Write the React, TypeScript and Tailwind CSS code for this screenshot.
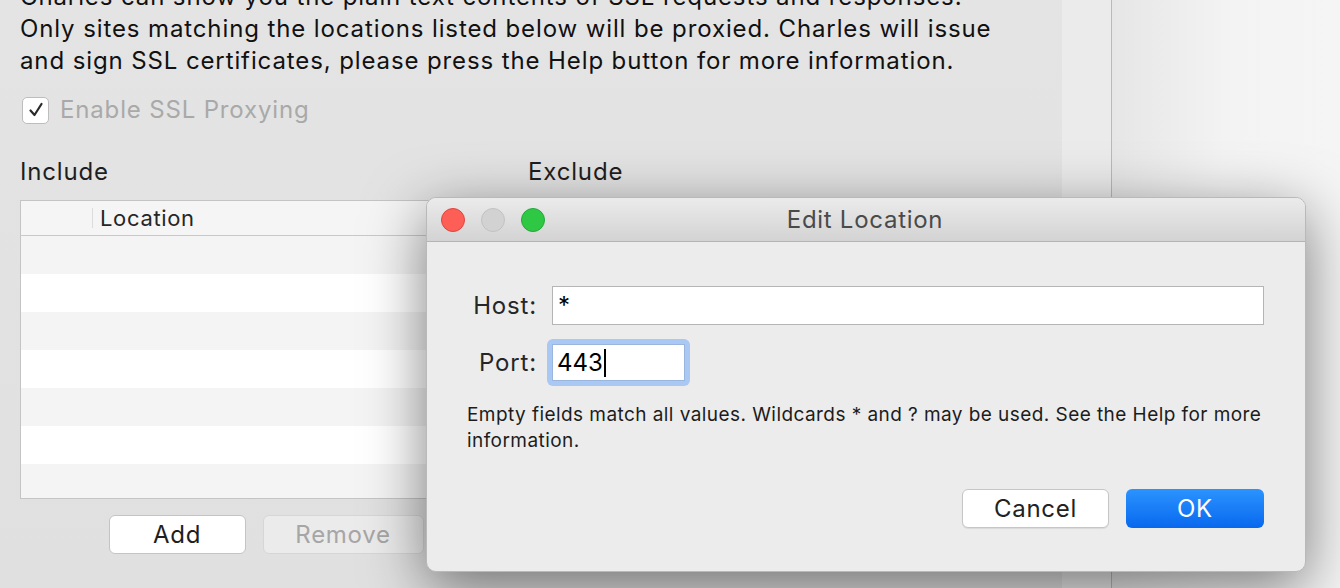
import React from 'react';

const font = { fontFamily: 'Inter, "Liberation Sans", sans-serif' };

const rows = [0, 1, 2, 3, 4, 5, 6];

const LocationTable = () => (
  <div className="h-[299px] overflow-hidden border border-[#c4c4c4] bg-white">
    <div className="flex h-[35px] items-center border-b border-[#c9c9c9] bg-[#f5f5f5]">
      <div className="w-[72px] self-stretch py-[7px]">
        <div className="ml-auto h-full w-px bg-[#dcdcdc]" />
      </div>
      <span className="pl-[7px] text-[22px] tracking-[0.03em] text-[#262626]">Location</span>
    </div>
    {rows.map((r) => (
      <div key={r} className={r % 2 === 0 ? 'h-[38px] bg-[#f4f4f4]' : 'h-[38px] bg-white'} />
    ))}
  </div>
);

const EditLocationDialog = () => (
  <div className="absolute left-[426px] top-[197px] flex h-[375px] w-[880px] flex-col overflow-hidden rounded-[10px] border border-[#b9b9b9] bg-[#ececec] shadow-[0_16px_60px_rgba(0,0,0,0.5)]">
    <div className="relative flex h-[44px] items-center border-b border-[#b4b4b4] bg-gradient-to-b from-[#ebebeb] to-[#d3d3d3] px-[14px]">
      <div className="flex gap-[16px]">
        <span className="h-[24px] w-[24px] rounded-full border border-[#e0443e] bg-[#fd5f57]" />
        <span className="h-[24px] w-[24px] rounded-full border border-[#c2c2c2] bg-[#d2d2d2]" />
        <span className="h-[24px] w-[24px] rounded-full border border-[#24a83a] bg-[#2fc844]" />
      </div>
      <span className="flex-1 pr-[106px] text-center text-[24px] tracking-[0.03em] text-[#4a4a4a]">Edit Location</span>
    </div>
    <div className="flex flex-1 flex-col px-[40px]">
      <div className="mt-[44px] flex items-center">
        <span className="w-[70px] text-right text-[24px] tracking-[0.035em] text-[#262626]">Host:</span>
        <div className="ml-[15px] flex h-[39px] w-[712px] items-center border border-[#b5b5b5] bg-white pl-[5px] text-[24px] text-black">
          *
        </div>
      </div>
      <div className="mt-[14px] flex items-center">
        <span className="w-[70px] text-right text-[24px] tracking-[0.035em] text-[#262626]">Port:</span>
        <div className="ml-[10px] rounded-[6px] bg-[#a9c8f3] p-[5px]">
          <div className="flex h-[37px] w-[133px] items-center border border-[#9bb6de] bg-white pl-[4px] text-[24px] text-black">
            443<span className="ml-[1px] h-[28px] w-[2px] bg-black" />
          </div>
        </div>
      </div>
      <p className="mt-[16px] text-[19px] leading-[26px] tracking-[0.023em] text-[#1c1c1c]">
        Empty fields match all values. Wildcards * and ? may be used. See the Help for more information.
      </p>
      <div className="mt-auto mb-[43px] flex justify-end gap-[17px] pr-[1px]">
        <button className="h-[39px] w-[147px] rounded-[6px] border border-[#c6c6c6] bg-white text-[24px] tracking-[0.03em] text-[#222] shadow-[0_1px_1px_rgba(0,0,0,0.08)]">
          Cancel
        </button>
        <button className="h-[39px] w-[138px] rounded-[6px] bg-gradient-to-b from-[#2b93ff] to-[#0868ee] text-[24px] tracking-[0.03em] text-white">
          OK
        </button>
      </div>
    </div>
  </div>
);

export default function App() {
  return (
    <div className="relative flex h-[588px] w-[1340px] overflow-hidden bg-[#e3e3e3]" style={font}>
      <div className="w-[1062px] bg-gradient-to-b from-[#e4e4e4] to-[#e0e0e0] pl-[20px] pr-[20px]">
        <p className="-mt-[19px] whitespace-nowrap text-[24px] leading-[32px] tracking-[0.037em] text-[#111]">
          Charles can show you the plain text contents of SSL requests and responses.
          <br />
          Only sites matching the locations listed below will be proxied. Charles will issue
          <br />
          and sign SSL certificates, please press the Help button for more information.
        </p>
        <div className="mt-[15px] flex items-center">
          <span className="ml-[2px] flex h-[27px] w-[27px] items-center justify-center rounded-[5px] border border-[#bdbdbd] bg-white">
            <svg width="18" height="18" viewBox="0 0 18 18" fill="none">
              <path d="M3.5 9.5 L7.5 14 L14.5 3" stroke="#2a2a2a" strokeWidth="2.2" strokeLinecap="round" strokeLinejoin="round" />
            </svg>
          </span>
          <span className="ml-[11px] text-[24px] tracking-[0.035em] text-[#a9a9a9]">Enable SSL Proxying</span>
        </div>
        <div className="mt-[29px] flex gap-[20px]">
          <div className="w-[488px]">
            <div className="text-[24px] leading-[30px] tracking-[0.035em] text-[#1e1e1e]">Include</div>
            <div className="mt-[13px]">
              <LocationTable />
            </div>
            <div className="mt-[16px] flex justify-center gap-[17px] pl-[4px]">
              <button className="h-[39px] w-[137px] rounded-[6px] border border-[#c4c4c4] bg-white text-[24px] tracking-[0.03em] text-[#1e1e1e]">
                Add
              </button>
              <button className="h-[39px] w-[161px] rounded-[6px] border border-[#d6d6d6] bg-[#ebebeb] text-[24px] tracking-[0.03em] text-[#a6a6a6]">
                Remove
              </button>
            </div>
          </div>
          <div className="w-[488px]">
            <div className="text-[24px] leading-[30px] tracking-[0.035em] text-[#1e1e1e]">Exclude</div>
            <div className="mt-[13px]">
              <LocationTable />
            </div>
          </div>
        </div>
      </div>
      <div className="w-[50px] border-r border-[#b9b9b9] bg-[#ebebeb]" />
      <div className="flex-1 bg-gradient-to-r from-[#e6e6e6] via-[#f3f3f3] to-[#f5f5f5]" />
      <EditLocationDialog />
    </div>
  );
}
